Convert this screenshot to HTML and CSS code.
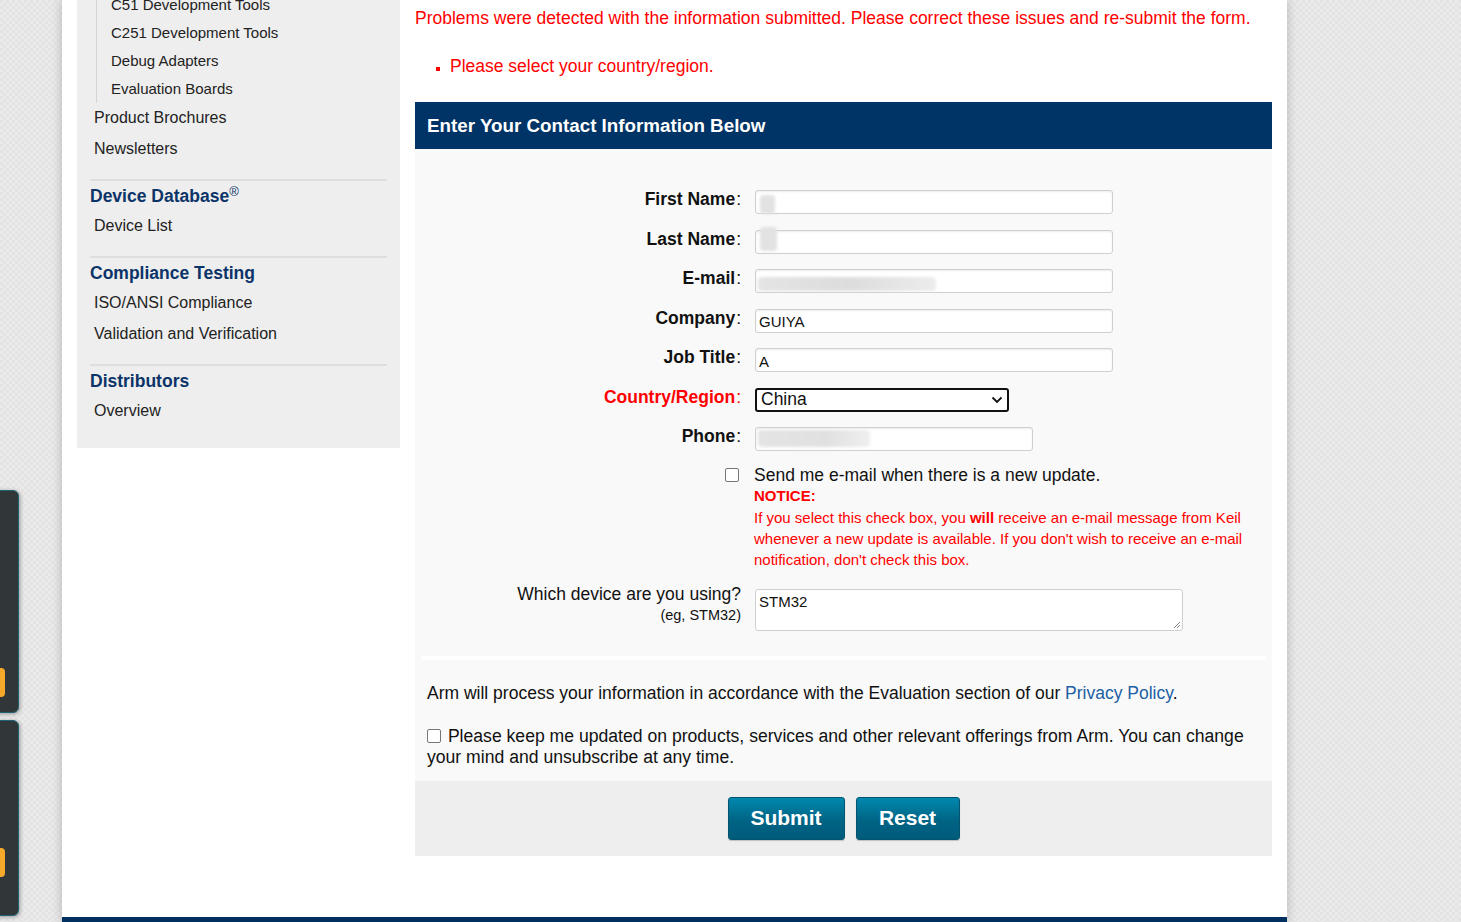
FILE: index.html
```html
<!DOCTYPE html>
<html>
<head>
<meta charset="utf-8">
<title>Contact Information</title>
<link rel="stylesheet" href="styles.css">
</head>
<body>
<div class="page">
  <div class="layout">
    <aside class="sidebar">
      <ul class="sublist">
        <li>C51 Development Tools</li>
        <li>C251 Development Tools</li>
        <li>Debug Adapters</li>
        <li>Evaluation Boards</li>
      </ul>
      <ul class="navlist">
        <li>Product Brochures</li>
        <li>Newsletters</li>
      </ul>
      <div class="section">
        <h3 class="sec-title">Device Database<sup>®</sup></h3>
        <ul class="navlist"><li>Device List</li></ul>
      </div>
      <div class="section">
        <h3 class="sec-title">Compliance Testing</h3>
        <ul class="navlist"><li>ISO/ANSI Compliance</li><li>Validation and Verification</li></ul>
      </div>
      <div class="section">
        <h3 class="sec-title">Distributors</h3>
        <ul class="navlist"><li>Overview</li></ul>
      </div>
    </aside>
    <main class="main">
      <p class="error">Problems were detected with the information submitted. Please correct these issues and re-submit the form.</p>
      <ul class="errlist"><li>Please select your country/region.</li></ul>
      <div class="form-head">Enter Your Contact Information Below</div>
      <div class="form-body">
        <div class="row"><label class="lbl">First Name<span class="colon">:</span></label><div class="field"><input class="txt" type="text"><span class="blur b1"></span></div></div>
        <div class="row"><label class="lbl">Last Name<span class="colon">:</span></label><div class="field"><input class="txt" type="text"><span class="blur b2"></span></div></div>
        <div class="row"><label class="lbl">E-mail<span class="colon">:</span></label><div class="field"><input class="txt" type="text"><span class="blur b3"></span></div></div>
        <div class="row"><label class="lbl">Company<span class="colon">:</span></label><div class="field"><input class="txt" type="text" value="GUIYA"></div></div>
        <div class="row"><label class="lbl">Job Title<span class="colon">:</span></label><div class="field"><input class="txt" type="text" value="A"></div></div>
        <div class="row"><label class="lbl req">Country/Region<span class="colon">:</span></label><div class="field"><div class="select"><span>China</span><svg class="chev" width="12" height="8" viewBox="0 0 12 8"><path d="M1.5 1.5 L6 6 L10.5 1.5" fill="none" stroke="#111" stroke-width="1.8"/></svg></div></div></div>
        <div class="row"><label class="lbl">Phone<span class="colon">:</span></label><div class="field"><input class="txt phone" type="text"><span class="blur b4"></span></div></div>
        <div class="row notify">
          <div class="cbcell"><span class="cb"></span></div>
          <div class="notify-text">
            <div class="sendme">Send me e-mail when there is a new update.</div>
            <div class="notice-title">NOTICE:</div>
            <p class="notice">If you select this check box, you <b>will</b> receive an e-mail message from Keil whenever a new update is available. If you don't wish to receive an e-mail notification, don't check this box.</p>
          </div>
        </div>
        <div class="row device">
          <label class="lbl plain">Which device are you using?<small>(eg, STM32)</small></label>
          <div class="field"><div class="textarea">STM32<svg class="grip" width="10" height="10" viewBox="0 0 10 10"><path d="M9 3 L3 9 M9 6 L6 9" stroke="#888" stroke-width="1"/></svg></div></div>
        </div>
        <div class="sep"></div>
        <p class="privacy">Arm will process your information in accordance with the Evaluation section of our <a class="link">Privacy Policy</a>.</p>
        <p class="optin"><span class="cb small"></span> Please keep me updated on products, services and other relevant offerings from Arm. You can change your mind and unsubscribe at any time.</p>
      </div>
      <div class="actions">
        <button class="btn submit">Submit</button>
        <button class="btn reset">Reset</button>
      </div>
    </main>
  </div>
  <div class="footer"></div>
</div>
<div class="widget w1"><span class="tab"></span></div>
<div class="widget w2"><span class="tab"></span></div>
</body>
</html>
```

FILE: styles.css
```css
* { box-sizing: border-box; }
html, body { margin: 0; padding: 0; height: 100%; overflow: hidden; }
body {
  font-family: "Liberation Sans", Arial, sans-serif;
  color: #111;
  background-color: #e7e7e7;
  background-image: repeating-conic-gradient(#eaeaea 0 25%, #e3e3e3 0 50%);
  background-size: 6px 6px;
}
.page {
  margin-left: 62px;
  width: 1225px;
  height: 922px;
  background: #fff;
  box-shadow: 0 0 10px rgba(0,0,0,0.22);
  display: flex;
  flex-direction: column;
}
.layout {
  display: flex;
  align-items: flex-start;
  padding: 0 15px;
  gap: 15px;
  height: 917px;
}
/* Sidebar */
.sidebar {
  width: 323px;
  background: #eeeeee;
  margin-top: -9px;
  padding: 0 13px 22px 13px;
}
.sidebar ul { list-style: none; margin: 0; padding: 0; }
.sublist {
  margin-left: 6px !important;
  border-left: 1px solid #d4d4d4;
  padding-left: 14px !important;
}
.sublist li { font-size: 15px; line-height: 28px; color: #222; }
.navlist li { font-size: 16px; line-height: 30px; padding-left: 4px; color: #222; }
.navlist li + li { margin-top: 1px; }
.section {
  border-top: 2px solid #dedede;
  margin-top: 15px;
}
.sec-title {
  margin: 0;
  font-size: 17.5px;
  line-height: 30px;
  font-weight: bold;
  color: #0b3468;
}
.sec-title sup { font-size: 13px; font-weight: normal; vertical-align: 6px; line-height: 0; }
/* Main */
.main { width: 857px; }
.error {
  margin: 7px 0 0 0;
  color: #ff0000;
  font-size: 17.5px;
  line-height: 22px;
}
.errlist {
  margin: 26px 0 0 0;
  padding-left: 35px;
  color: #ff0000;
  font-size: 17.5px;
  line-height: 22px;
  list-style: square;
}
.errlist li::marker { font-size: 12px; }
.form-head {
  margin-top: 25px;
  height: 47px;
  background: #003366;
  color: #fff;
  font-weight: bold;
  font-size: 18.8px;
  line-height: 47px;
  padding-left: 12px;
}
.form-body {
  background: #f9f9f9;
  padding: 41px 6px 13px 6px;
}
.row {
  display: grid;
  grid-template-columns: 320px 1fr;
  column-gap: 14px;
  height: 39.5px;
  align-items: start;
}
.lbl {
  text-align: right;
  font-weight: bold;
  font-size: 17.5px;
  line-height: 20px;
  margin-top: -1px;
  color: #111;
}
.lbl .colon { font-weight: normal; margin-left: 1px; }
.lbl.req { color: #ff0000; }
.field { position: relative; }
.txt {
  display: block;
  width: 358px;
  height: 24px;
  border: 1px solid #cfcfcf;
  border-radius: 3px;
  background: #fff;
  box-shadow: inset 0 1px 2px rgba(0,0,0,0.08);
  font-family: "Liberation Sans", Arial, sans-serif;
  font-size: 15px;
  color: #111;
  padding: 2px 3px 0 3px;
}
.txt.phone { width: 278px; }
.blur { position: absolute; background: #e2e2e2; border-radius: 4px; filter: blur(1.5px); }
.b1 { left: 5px; top: 5px; width: 15px; height: 19px; }
.b2 { left: 5px; top: -3px; width: 17px; height: 24px; }
.b3 { left: 3px; top: 8px; width: 178px; height: 14px; background: linear-gradient(90deg,#e4e4e4,#dcdcdc 50%,#ececec); }
.b4 { left: 3px; top: 3px; width: 112px; height: 17px; background: linear-gradient(90deg,#e4e4e4,#e0e0e0 60%,#efefef); }
.select {
  width: 254px;
  height: 24px;
  border: 2px solid #111;
  border-radius: 3px;
  background: #fff;
  display: flex;
  align-items: center;
  justify-content: space-between;
  padding: 0 4px 0 4px;
  font-size: 17.5px;
  color: #111;
}
.chev { margin-top: 1px; }
.row.notify { height: auto; }
.cbcell { display: flex; justify-content: flex-end; padding-top: 1px; padding-right: 2px; }
.cb {
  display: inline-block;
  width: 14px;
  height: 14px;
  border: 1px solid #767676;
  border-radius: 2px;
  background: #fff;
}
.notify-text { margin-left: -1px; }
.sendme { font-size: 17.5px; line-height: 20px; margin-top: -2px; }
.notice-title { color: #ff0000; font-weight: bold; font-size: 15px; line-height: 20px; margin-top: 1px; }
.notice {
  margin: 1px 0 0 0;
  color: #ff0000;
  font-size: 15px;
  line-height: 21px;
  width: 500px;
}
.notice b { font-weight: bold; }
.row.device { height: auto; margin-top: 19px; }
.lbl.plain { font-weight: normal; font-size: 17.5px; line-height: 20px; margin-top: -5px; }
.lbl.plain small { display: block; font-size: 14.5px; line-height: 22px; }
.textarea {
  position: relative;
  width: 428px;
  height: 42px;
  border: 1px solid #cfcfcf;
  border-radius: 3px;
  background: #fff;
  font-size: 15px;
  padding: 3px 3px;
}
.grip { position: absolute; right: 1px; bottom: 1px; }
.sep { height: 4px; background: #fff; margin: 25px 0 0 0; }
.privacy {
  margin: 22px 0 0 0;
  padding-left: 6px;
  font-size: 17.5px;
  line-height: 22px;
  color: #111;
}
.link { color: #1d5fa3; text-decoration: none; }
.optin {
  margin: 22px 0 0 0;
  padding-left: 6px;
  font-size: 17.6px;
  line-height: 21px;
  color: #111;
}
.cb.small { width: 14px; height: 14px; vertical-align: -1px; margin-right: 2px; }
.actions {
  background: #eeeeee;
  height: 75px;
  display: flex;
  justify-content: center;
  align-items: center;
  gap: 11px;
}
.btn {
  height: 43px;
  border: 1px solid #035470;
  border-radius: 3px;
  background: linear-gradient(#0088ad, #006485 55%, #005a7a);
  color: #fff;
  font-family: "Liberation Sans", Arial, sans-serif;
  font-weight: bold;
  font-size: 21px;
  box-shadow: 0 1px 1px rgba(0,0,0,0.2);
}
.submit { width: 117px; }
.reset { width: 104px; }
.footer { height: 5px; background: #00305f; }
/* Side widgets */
.widget {
  position: fixed;
  left: -12px;
  width: 31px;
  background: #313638;
  border: 1px solid #1f6373;
  border-radius: 6px;
  box-shadow: 1px 1px 4px rgba(0,0,0,0.35);
}
.w1 { top: 490px; height: 223px; }
.w2 { top: 720px; height: 196px; }
.tab {
  position: absolute;
  left: 11px;
  width: 5px;
  height: 29px;
  background: #f7aa2a;
  border-radius: 0 4px 4px 0;
}
.w1 .tab { top: 177px; }
.w2 .tab { top: 127px; }
```
